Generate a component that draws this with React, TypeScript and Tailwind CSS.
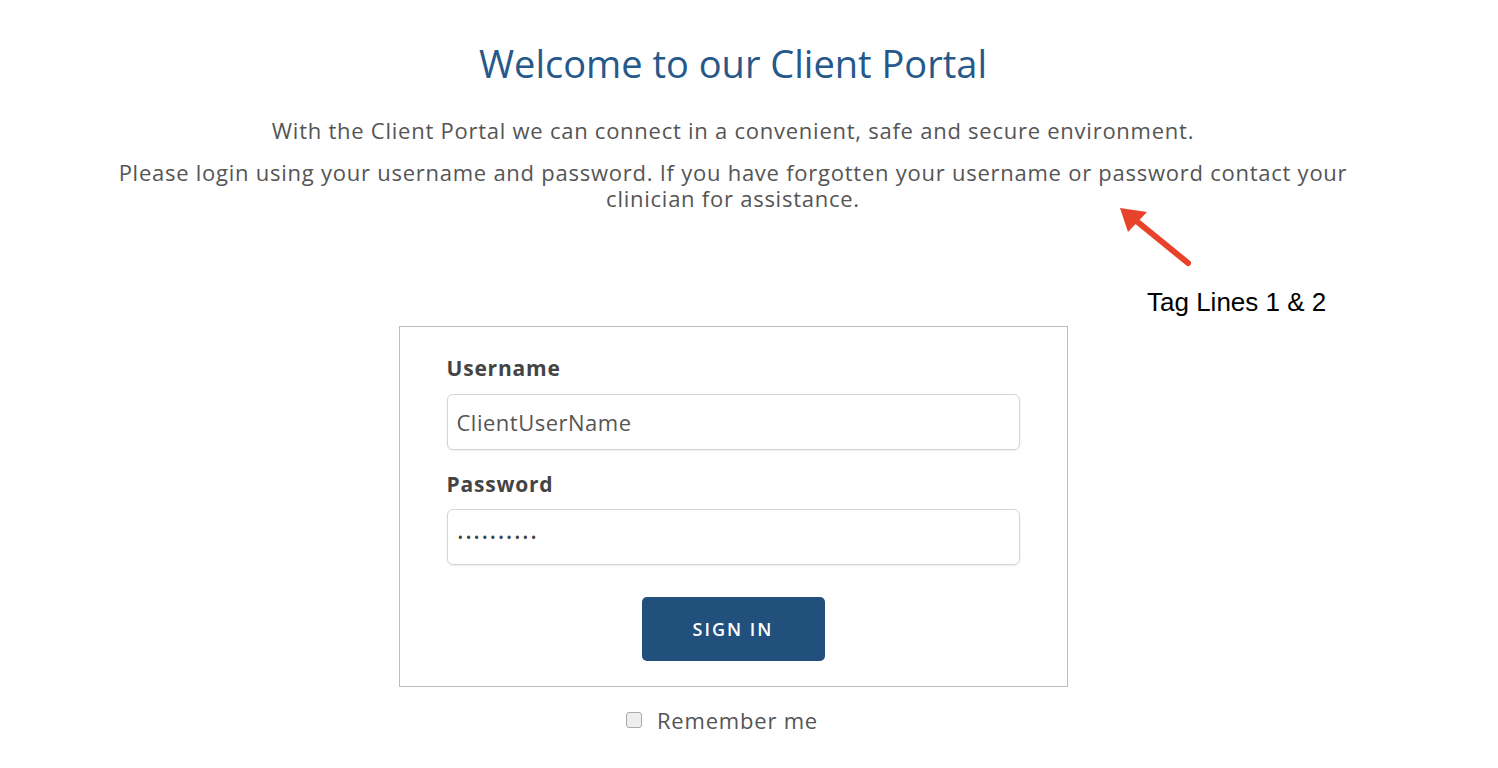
import React, { useState } from 'react';

function App() {
  const [username, setUsername] = useState('ClientUserName');
  const [password, setPassword] = useState('••••••••••');
  const [remember, setRemember] = useState(false);

  return (
    <div className="relative min-h-screen bg-white font-['Open_Sans',sans-serif] text-[#555]">
      <div className="flex flex-col items-center pr-[32px]">
        <h1 className="mt-[38px] text-[38px] leading-[50px] font-normal text-[#26588a]">
          Welcome to our Client Portal
        </h1>
        <p className="mt-[29px] text-[22px] leading-[26px] tracking-[0.75px] text-center whitespace-nowrap">
          With the Client Portal we can connect in a convenient, safe and secure environment.
        </p>
        <p className="mt-[16px] w-[1300px] text-[22px] leading-[26px] tracking-[0.75px] text-center">
          Please login using your username and password. If you have forgotten your username or password contact your
          <br />
          clinician for assistance.
        </p>

        <div className="mt-[115px] w-[669px] border border-[#bdbdbd] pt-[29px] pb-[25px] px-[47px] flex flex-col">
          <label className="text-[21px] leading-[24px] font-bold tracking-[0.8px] text-[#444]">Username</label>
          <input
            type="text"
            value={username}
            onChange={(e) => setUsername(e.target.value)}
            className="mt-[14px] h-[56px] w-full rounded-[6px] border border-[#d4d4d4] px-[9px] text-[22px] tracking-[0.5px] text-[#555] shadow-[0_1px_2px_rgba(0,0,0,0.08)] outline-none"
          />
          <label className="mt-[22px] text-[21px] leading-[24px] font-bold tracking-[0.8px] text-[#444]">Password</label>
          <input
            type="text"
            value={password}
            onChange={(e) => setPassword(e.target.value)}
            className="mt-[13px] h-[56px] w-full rounded-[6px] border border-[#d4d4d4] px-[10px] text-[15px] tracking-[2.5px] text-[#444] shadow-[0_1px_2px_rgba(0,0,0,0.08)] outline-none"
          />
          <div className="mt-[32px] flex justify-center">
            <button className="h-[64px] w-[183px] rounded-[5px] bg-[#22507c] text-[18px] font-semibold tracking-[2px] text-white">
              SIGN IN
            </button>
          </div>
        </div>

        <label className="mt-[21px] flex items-center gap-[15px] pr-[22px] text-[22px] leading-[24px] tracking-[0.8px] text-[#555]">
          <input
            type="checkbox"
            checked={remember}
            onChange={(e) => setRemember(e.target.checked)}
            className="h-[16px] w-[16px] appearance-none rounded-[3px] border border-[#aaa] bg-[#eee]"
          />
          Remember me
        </label>
      </div>

      <svg className="absolute left-[1110px] top-[198px]" width="90" height="75" viewBox="0 0 90 75">
        <line x1="78" y1="65" x2="24" y2="21" stroke="#e8432a" strokeWidth="6" strokeLinecap="round" />
        <polygon points="10,10 37,14 18,34" fill="#e8432a" />
      </svg>
      <div className="absolute left-[1147px] top-[287px] font-['Liberation_Sans',Arial,sans-serif] text-[26px] leading-[30px] text-black">
        Tag Lines 1 &amp; 2
      </div>
    </div>
  );
}

export default App;
